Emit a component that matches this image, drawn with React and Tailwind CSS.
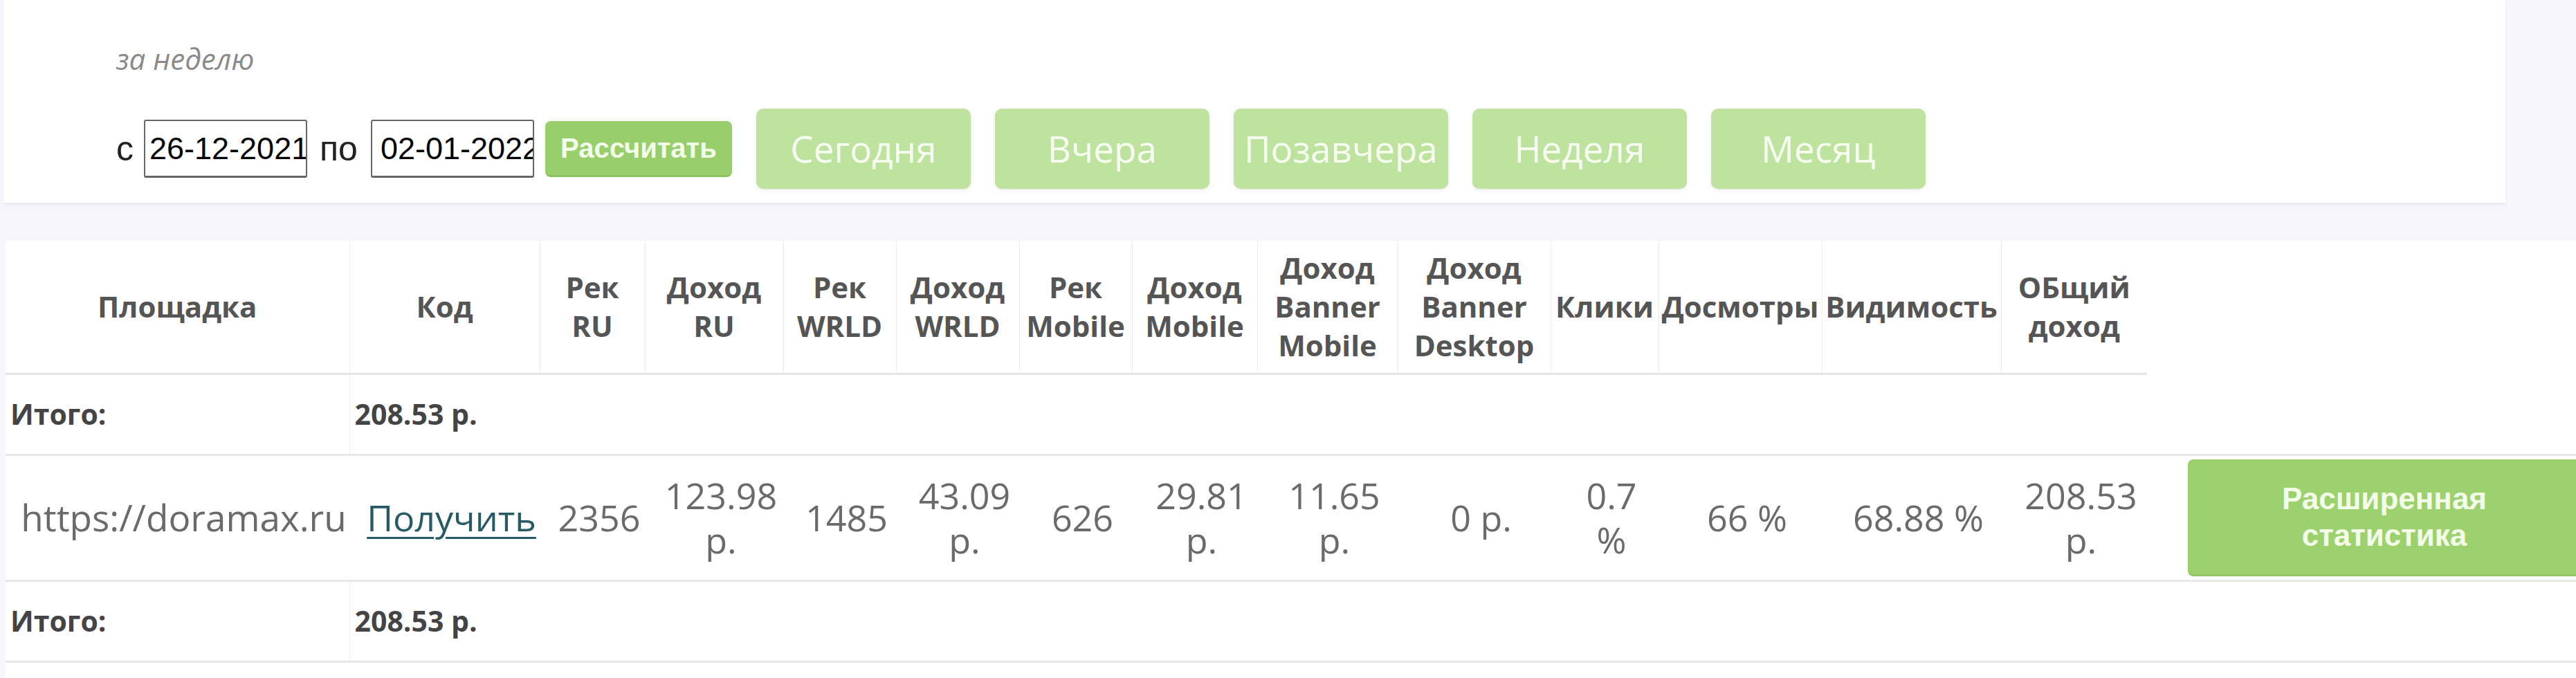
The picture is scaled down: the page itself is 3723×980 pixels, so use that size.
export default function App() {
  const headers = [
    ["Площадка"],
    ["Код"],
    ["Рек", "RU"],
    ["Доход", "RU"],
    ["Рек", "WRLD"],
    ["Доход", "WRLD"],
    ["Рек", "Mobile"],
    ["Доход", "Mobile"],
    ["Доход", "Banner", "Mobile"],
    ["Доход", "Banner", "Desktop"],
    ["Клики"],
    ["Досмотры"],
    ["Видимость"],
    ["ОБщий", "доход"],
  ];
  const values = [
    ["2356"],
    ["123.98", "р."],
    ["1485"],
    ["43.09", "р."],
    ["626"],
    ["29.81", "р."],
    ["11.65", "р."],
    ["0 р."],
    ["0.7", "%"],
    ["66 %"],
    ["68.88 %"],
    ["208.53", "р."],
  ];
  const quick = ["Сегодня", "Вчера", "Позавчера", "Неделя", "Месяц"];

  const totalRow = (
    <tr className="h-[117px] border-b-[3px] border-[#e8e8e8]">
      <td className="pl-[7px] align-middle text-[41px] font-bold text-[#444] font-['Open_Sans',sans-serif]">
        Итого:
      </td>
      <td
        colSpan={13}
        className="border-l border-[#ececec] pl-[7px] align-middle text-[41px] font-bold text-[#444] font-['Open_Sans',sans-serif]"
      >
        208.53 р.
      </td>
      <td></td>
    </tr>
  );

  return (
    <div className="w-[3723px] h-[980px] overflow-hidden bg-[#f5f5fb]">
      {/* top panel */}
      <div className="ml-[5px] w-[3616px] h-[293px] bg-white shadow-[0_3px_4px_rgba(0,0,0,0.05)] pl-[163px] pt-[57px]">
        <div className="h-[56px] leading-[56px] text-[42px] italic text-[#8a8a8a] font-['Open_Sans',sans-serif]">
          за неделю
        </div>
        <div className="mt-[44px] h-[116px] flex items-center">
          <span className="text-[50px] text-[#222] font-['Liberation_Sans',Arial,sans-serif] leading-none">
            с
          </span>
          <input
            readOnly
            value="26-12-2021"
            className="ml-[15px] w-[236px] h-[84px] border-2 border-[#666] border-b-[3px] rounded-[3px] bg-white pl-[6px] pr-0 text-[45px] text-black font-['Liberation_Sans',Arial,sans-serif] outline-none"
          />
          <span className="ml-[18px] text-[50px] text-[#222] font-['Liberation_Sans',Arial,sans-serif] leading-none">
            по
          </span>
          <input
            readOnly
            value="02-01-2022"
            className="ml-[19px] w-[236px] h-[84px] border-2 border-[#666] border-b-[3px] rounded-[3px] bg-white pl-[12px] pr-0 text-[45px] text-black font-['Liberation_Sans',Arial,sans-serif] outline-none"
          />
          <button className="ml-[16px] w-[270px] h-[81px] rounded-[8px] bg-[#98cf6c] border-b-[3px] border-[#8cc262] text-[40px] font-bold text-[#f4ffea] font-['Liberation_Sans',Arial,sans-serif]">
            Рассчитать
          </button>
          <div className="ml-[35px] flex gap-[35px]">
            {quick.map((q) => (
              <button
                key={q}
                className="w-[310px] h-[116px] rounded-[10px] bg-[#bde39f] shadow-[0_2px_5px_rgba(0,0,0,0.08)] text-[53px] text-[#f8fff2] font-['Open_Sans',sans-serif]"
              >
                {q}
              </button>
            ))}
          </div>
        </div>
      </div>

      {/* table */}
      <div className="mt-[55px] ml-[8px] bg-white h-[632px]">
        <table className="table-fixed border-collapse w-[3723px]">
          <colgroup>
            <col className="w-[497px]" />
            <col className="w-[275px]" />
            <col className="w-[152px]" />
            <col className="w-[200px]" />
            <col className="w-[163px]" />
            <col className="w-[178px]" />
            <col className="w-[163px]" />
            <col className="w-[181px]" />
            <col className="w-[203px]" />
            <col className="w-[221px]" />
            <col className="w-[156px]" />
            <col className="w-[236px]" />
            <col className="w-[259px]" />
            <col className="w-[211px]" />
            <col className="w-[628px]" />
          </colgroup>
          <thead>
            <tr className="h-[192px]">
              {headers.map((h, i) => (
                <th
                  key={i}
                  className={
                    "border-b-[3px] border-[#e6e6e6] align-middle text-center text-[42px] leading-[56px] font-bold text-[#555] font-['Open_Sans',sans-serif] whitespace-nowrap " +
                    (i < 13 ? "border-r border-r-[#ececec]" : "")
                  }
                >
                  {h.map((l, j) => (
                    <div key={j}>{l}</div>
                  ))}
                </th>
              ))}
              <th></th>
            </tr>
          </thead>
          <tbody>
            {totalRow}
            <tr className="h-[182px] border-b-[3px] border-[#e8e8e8]">
              <td className="pl-[18px] text-center align-middle text-[53px] leading-[64px] text-[#6a6a6a] font-['Open_Sans',sans-serif] whitespace-nowrap">
                https://doramax.ru
              </td>
              <td className="pl-[20px] text-center align-middle text-[52px] leading-[64px] font-['Open_Sans',sans-serif]">
                <a href="#" className="text-[#265a66] underline decoration-[3px] underline-offset-[8px]">
                  Получить
                </a>
              </td>
              {values.map((v, i) => (
                <td
                  key={i}
                  className="pl-[20px] text-center align-middle text-[52px] leading-[64px] text-[#6a6a6a] font-['Open_Sans',sans-serif] whitespace-nowrap"
                >
                  {v.map((l, j) => (
                    <div key={j}>{l}</div>
                  ))}
                </td>
              ))}
              <td className="pl-[59px] align-middle">
                <button className="w-[580px] h-[169px] rounded-l-[8px] bg-[#9dd16e] border-b-[3px] border-[#93c766] text-[44px] leading-[53px] font-bold text-[#f4ffea] text-left font-['Liberation_Sans',Arial,sans-serif]">
                  <span className="block w-[568px] text-center">
                    Расширенная
                    <br />
                    статистика
                  </span>
                </button>
              </td>
            </tr>
            {totalRow}
          </tbody>
        </table>
      </div>
    </div>
  );
}
